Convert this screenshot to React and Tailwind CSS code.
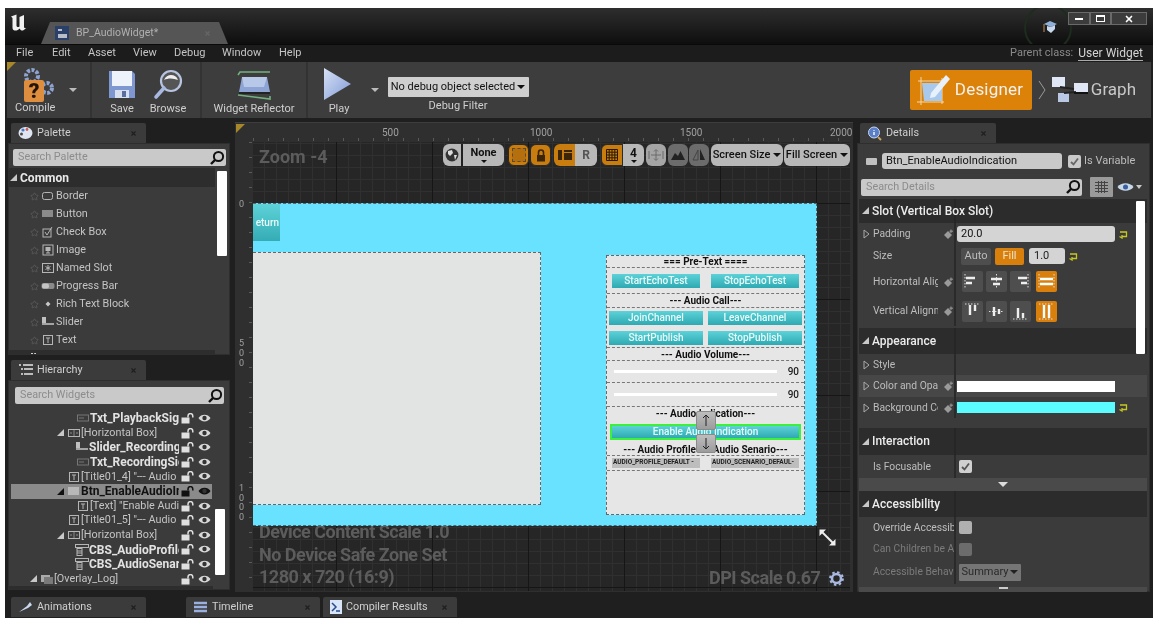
import React from "react";
import { Star, X } from "lucide-react";

const Tri = ({ open = true, c = "#c8c8c8" }) => open ? (
  <svg width="7" height="7" viewBox="0 0 7 7" className="shrink-0"><path d="M7 0V7H0Z" fill={c} /></svg>
) : (
  <svg width="7" height="10" viewBox="0 0 7 10" className="shrink-0"><path d="M1 1L6 5L1 9Z" fill="none" stroke="#aaa" /></svg>
);

const Search = () => (
  <svg width="16" height="16" viewBox="0 0 16 16" className="shrink-0"><circle cx="9.5" cy="6.5" r="4.6" fill="none" stroke="#111" strokeWidth="2" /><path d="M6 10L2 14" stroke="#111" strokeWidth="2.4" /></svg>
);

const Tab = ({ icon, label, w = "w-[135px]" }) => (
  <div className={`${w} h-[20px] bg-[#3b3b3b] rounded-t-[2px] flex items-center pl-[7px] pr-[9px] gap-[4px] text-[#cfcfcf] text-[10.8px]`}>
    {icon}
    <span className="flex-1">{label}</span>
    <X size={7} color="#1f1f1f" strokeWidth={4} />
  </div>
);

const SearchBox = ({ label, cls }) => (
  <div className={`${cls} h-[17px] bg-[#c9c9c9] rounded-[2px] flex items-center pl-[5px] pr-[1px] text-[#8c8c8c] text-[10.8px]`}>
    <span className="flex-1">{label}</span><Search />
  </div>
);

const PIcon = ({ t }) => {
  const s = { fill: "none", stroke: "#b5b5b5" };
  return (
    <svg width="14" height="12" viewBox="0 0 14 12" className="shrink-0">
      {t === "border" && <rect x="1.5" y="2.5" width="10" height="7" rx="2" {...s} />}
      {t === "button" && <rect x="1" y="2" width="11" height="7" fill="#8a8a8a" />}
      {t === "check" && <g><rect x="2" y="3" width="8" height="8" {...s} /><path d="M4 6L6 9L11 1" {...s} /></g>}
      {t === "image" && <g><rect x="2" y="1" width="10" height="10" {...s} /><rect x="4.5" y="3" width="5" height="4" fill="#b5b5b5" /><path d="M7 7V9M5 9H9" {...s} /></g>}
      {t === "slot" && <g><rect x="1.5" y="1.5" width="11" height="9" {...s} /><path d="M7 3V9M4.5 4.5L9.5 7.5M9.5 4.5L4.5 7.5" {...s} /></g>}
      {t === "progress" && <g><rect x="0.5" y="3" width="13" height="6" rx="2" fill="#8a8a8a" /><rect x="1" y="3.5" width="7" height="5" rx="2" fill="#c4c4c4" /></g>}
      {t === "rich" && <path d="M7 3.5L9.5 6L7 8.5L4.5 6Z" fill="#c8c8c8" />}
      {t === "slider" && <g><rect x="1" y="1" width="4" height="6" fill="#c0c0c0" /><path d="M1 8H13" stroke="#c0c0c0" strokeWidth="1.6" /></g>}
      {t === "text" && <g><rect x="2.5" y="1.5" width="9" height="9" {...s} /><path d="M5 4H9M7 4V9" {...s} /></g>}
      {t === "box" && <g><rect x="1.5" y="2.5" width="11" height="7" {...s} /><path d="M7 3V9M3 6H5M9 6H11" stroke="#8a8a8a" /></g>}
      {t === "txt" && <g><rect x="1.5" y="3" width="11" height="6" stroke="#777" fill="none" /><path d="M3 6H8" stroke="#777" /></g>}
      {t === "cbs" && <g><rect x="0.5" y="0.5" width="13" height="3" {...s} /><rect x="2" y="4.5" width="5" height="7" {...s} /><path d="M2 7H7M2 9H7" {...s} /></g>}
      {t === "overlay" && <g><rect x="1" y="2" width="9" height="7" fill="#aaa" /><rect x="4" y="4" width="9" height="7" fill="#7a7a7a" /></g>}
      {t === "btn" && <rect x="1" y="2" width="11" height="8" fill="#b8b8b8" />}
    </svg>
  );
};

const paletteItems = [
  ["border", "Border"], ["button", "Button"], ["check", "Check Box"], ["image", "Image"], ["slot", "Named Slot"],
  ["progress", "Progress Bar"], ["rich", "Rich Text Block"], ["slider", "Slider"], ["text", "Text"],
];

const LockIcon = ({ c = "#e0e0e0" }) => (
  <svg width="13" height="11" viewBox="0 0 13 11" className="shrink-0"><path d="M7 4.5V3a2.4 2.4 0 0 1 4.8 0V4.5" fill="none" stroke={c} strokeWidth="1.5" /><rect x="0.5" y="4.5" width="8" height="6" fill={c} /></svg>
);
const EyeIcon = ({ c = "#d8d8d8" }) => (
  <svg width="13" height="10" viewBox="0 0 13 10" className="shrink-0"><path d="M0.5 5C3 0.5 10 0.5 12.5 5C10 9.5 3 9.5 0.5 5Z" fill={c} /><circle cx="6.5" cy="5" r="2.2" fill="#333" /></svg>
);

const tree = [
  ["pl-[65px]", null, "txt", "Txt_PlaybackSignalVolume", 1],
  ["pl-[46px]", 1, "box", "[Horizontal Box]", 0],
  ["pl-[64px]", null, "slider", "Slider_RecordingVolume", 1],
  ["pl-[65px]", null, "txt", "Txt_RecordingSignalVolume", 1],
  ["pl-[56px]", null, "text", '[Title01_4] "--- Audio Indication', 0],
  ["pl-[46px]", 1, "btn", "Btn_EnableAudioIndication", 2],
  ["pl-[65px]", null, "text", '[Text] "Enable Audio Indication', 0],
  ["pl-[56px]", null, "text", '[Title01_5] "--- Audio Profile', 0],
  ["pl-[46px]", 1, "box", "[Horizontal Box]", 0],
  ["pl-[64px]", null, "cbs", "CBS_AudioProfile", 1],
  ["pl-[64px]", null, "cbs", "CBS_AudioSenario", 1],
  ["pl-[19px]", 1, "overlay", "[Overlay_Log]", 0],
];

const Palette = () => (
  <div className="flex flex-col">
    <div className="pl-[3px]">
      <Tab label="Palette" icon={
        <svg width="15" height="14" viewBox="0 0 15 14"><ellipse cx="7.5" cy="7" rx="7" ry="6" fill="#dfe6f2" /><circle cx="5" cy="4" r="1.6" fill="#4a78c8" /><circle cx="9" cy="3.5" r="1.4" fill="#c85a5a" /><circle cx="3.5" cy="8" r="1.5" fill="#4a4a4a" /></svg>
      } />
    </div>
    <div className="relative w-[222px] h-[212px] bg-[#3b3b3b] border border-[#2e2e2e] pt-[5px] overflow-hidden">
      <SearchBox label="Search Palette" cls="mx-[4px] w-[213px]" />
      <div className="mt-[2px] w-[206px] h-[19px] bg-[#2d2d2d] flex items-center pl-[1px] gap-[3px] text-[#e8e8e8] text-[12px] font-bold">
        <Tri /> <span>Common</span>
      </div>
      {paletteItems.map(([t, l]) => (
        <div key={l} className="h-[18px] flex items-center pl-[21px] text-[#c4c4c4] text-[10.8px]">
          <Star size={9} color="#6a6a6a" strokeWidth={1.5} className="shrink-0" />
          <span className="ml-[2px]"><PIcon t={t} /></span>
          <span className="ml-[1px]">{l}</span>
        </div>
      ))}
      <div className="mt-[1px] w-[206px] h-[18px] bg-[#2d2d2d] flex items-center pl-[1px] gap-[3px] text-[#e8e8e8] text-[12px] font-bold"><Tri /> <span>Edit</span></div>
      <div className="absolute left-[208px] top-[27px] w-[10px] h-[85px] bg-white rounded-[1px]" />
    </div>
  </div>
);

const Hierarchy = () => (
  <div className="flex flex-col mt-[5px]">
    <div className="pl-[3px]">
      <Tab label="Hierarchy" icon={
        <svg width="15" height="12" viewBox="0 0 15 12"><path d="M1 1H3M5 1H15M3 5H5M6 5H15M3 10H5M6 10H15" stroke="#e8e8e8" strokeWidth="1.7" /></svg>
      } />
    </div>
    <div className="relative w-[222px] h-[210px] bg-[#3b3b3b] border border-[#2e2e2e] pt-[6px] overflow-hidden">
      <SearchBox label="Search Widgets" cls="ml-[6px] w-[209px]" />
      <div className="mt-[7px] flex flex-col">
        {tree.map(([pl, tri, icon, label, kind], i) => (
          <div key={i} className={`relative ml-[2px] h-[14.6px] w-[201px] flex items-center ${pl} ${kind === 2 ? "bg-[#8b8b8b]" : ""}`}>
            {tri && <span className="mr-[3px]"><Tri c={kind === 2 ? "#111" : "#c8c8c8"} /></span>}
            <PIcon t={icon} />
            <span className={`whitespace-nowrap overflow-hidden flex-1 min-w-0 mr-[33px] ${kind === 0 ? "text-[10.8px] text-[#c4c4c4] font-normal" : kind === 1 ? "text-[12px] text-[#e2e2e2] font-bold" : "text-[12px] text-[#111] font-bold"}`}>{label}</span>
            <span className="absolute left-[170px] top-[2px]"><LockIcon c={kind === 2 ? "#111" : "#e0e0e0"} /></span>
            <span className="absolute left-[187px] top-[2px]"><EyeIcon c={kind === 2 ? "#111" : "#d8d8d8"} /></span>
          </div>
        ))}
      </div>
      <div className="absolute left-0 bottom-0 w-[204px] h-[3px] bg-[#2d2d2d]" />
      <div className="absolute left-[206px] top-[128px] w-[10px] h-[66px] bg-white rounded-[1px]" />
    </div>
  </div>
);

const CanvasBtn = ({ cls, children }) => (
  <div className={`h-[22px] flex items-center justify-center text-[11px] font-bold text-[#111] ${cls}`}>{children}</div>
);

const CanvasToolbar = () => (
  <div className="absolute left-[208px] top-[21px] flex items-center h-[22px]">
    <CanvasBtn cls="w-[20px] bg-[#b8b8b8] rounded-l-[6px] border-r-[2px] border-[#222]">
      <svg width="14" height="14" viewBox="0 0 14 14"><circle cx="7" cy="7" r="6.4" fill="#333" /><path d="M3 3L7 2L8 5L5 8L3 6ZM9 7L12 7L10 12Z" fill="#ddd" /></svg>
    </CanvasBtn>
    <CanvasBtn cls="w-[41px] bg-[#b8b8b8] rounded-r-[6px] flex-col text-[11px] leading-[12px]">None<span className="w-0 h-0 border-x-[3px] border-x-transparent border-t-[3px] border-t-[#111] mt-[1px]" /></CanvasBtn>
    <CanvasBtn cls="w-[21px] ml-[4px] bg-[#c87d0e] rounded-[6px] border border-[#2a2a2a]">
      <div className="w-[14px] h-[14px] border border-dashed border-[#5a4a30] bg-[#b56f0c]" />
    </CanvasBtn>
    <CanvasBtn cls="w-[21px] ml-[1px] bg-[#c87d0e] rounded-[6px] border border-[#2a2a2a]">
      <svg width="10" height="13" viewBox="0 0 10 13"><path d="M2.5 6V3.5a2.5 2.5 0 0 1 5 0V6" fill="none" stroke="#3a2506" strokeWidth="1.6" /><rect x="1" y="6" width="8" height="6.5" fill="#3a2506" /></svg>
    </CanvasBtn>
    <CanvasBtn cls="w-[21px] ml-[3px] bg-[#c87d0e] rounded-l-[6px]">
      <svg width="14" height="12" viewBox="0 0 14 12"><rect x="0" y="1" width="4" height="10" fill="#3a2506" /><rect x="6" y="4" width="8" height="7" fill="#3a2506" /><rect x="6" y="1" width="8" height="2" fill="#3a2506" /></svg>
    </CanvasBtn>
    <CanvasBtn cls="w-[22px] bg-[#b8b8b8] rounded-r-[6px] text-[#555] text-[12px]">R</CanvasBtn>
    <CanvasBtn cls="w-[22px] ml-[4px] bg-[#c87d0e] rounded-l-[6px] border border-[#2a2a2a]">
      <svg width="12" height="12" viewBox="0 0 12 12"><path d="M0.5 0.5H11.5V11.5H0.5ZM0.5 3.2H11.5M0.5 6H11.5M0.5 8.8H11.5M3.2 0.5V11.5M6 0.5V11.5M8.8 0.5V11.5" fill="none" stroke="#2a1a04" /></svg>
    </CanvasBtn>
    <CanvasBtn cls="w-[21px] bg-[#b8b8b8] rounded-r-[6px] flex-col text-[12px] leading-[12px]">4<span className="w-0 h-0 border-x-[3px] border-x-transparent border-t-[3px] border-t-[#111] mt-[1px]" /></CanvasBtn>
    <CanvasBtn cls="w-[20px] ml-[2px] bg-[#a5a5a5] rounded-[6px]">
      <svg width="16" height="14" viewBox="0 0 16 14"><path d="M1 3V11M15 3V11M3 7H13M8 2V12M6 3.5L8 1.5L10 3.5M6 10.5L8 12.5L10 10.5" fill="none" stroke="#6a6a6a" /></svg>
    </CanvasBtn>
    <CanvasBtn cls="w-[20px] ml-[2px] bg-[#6c6c6c] rounded-[6px]">
      <svg width="14" height="10" viewBox="0 0 14 10"><path d="M0 10L4 3L7 6L9.5 1L14 10Z" fill="#222" /></svg>
    </CanvasBtn>
    <CanvasBtn cls="w-[20px] ml-[1px] bg-[#6c6c6c] rounded-[6px]">
      <svg width="14" height="14" viewBox="0 0 14 14"><path d="M6 2L1 12H6Z" fill="none" stroke="#444" /><path d="M8 1L13 12H8Z" fill="#222" /></svg>
    </CanvasBtn>
    <CanvasBtn cls="w-[72px] h-[18px] ml-[2px] bg-[#b8b8b8] rounded-[6px] gap-[3px] font-medium text-[11.5px]">Screen Size<span className="w-0 h-0 border-x-[4px] border-x-transparent border-t-[4px] border-t-[#111]" /></CanvasBtn>
    <CanvasBtn cls="w-[66px] h-[18px] ml-[1px] bg-[#b8b8b8] rounded-[6px] gap-[3px] font-medium text-[11.5px]">Fill Screen<span className="w-0 h-0 border-x-[4px] border-x-transparent border-t-[4px] border-t-[#111]" /></CanvasBtn>
  </div>
);

const Teal = ({ w, children, h = "h-[14px]" }) => (
  <div className={`${w} ${h} bg-[linear-gradient(#5dd2d8,#2ea9b2)] flex items-center justify-center text-[#e8fbfb] text-[10px] font-medium`}>{children}</div>
);
const Title = ({ children, cls = "h-[13px]" }) => (
  <div className={`flex items-center justify-center text-[#111] text-[10px] font-bold whitespace-pre ${cls}`}>{children}</div>
);
const Dash = "border-b border-dashed border-[#777]";
const SliderRow = ({ h, cls = "" }) => (
  <div className={`${h} flex items-center pl-[7px] pr-[5px] ${cls}`}>
    <div className="w-[163px] h-[3px] bg-white" />
    <span className="ml-auto text-[#222] text-[10px] font-medium">90</span>
  </div>
);
const MoveBtn = ({ cls, d }) => (
  <div className={`absolute left-[89px] w-[20px] h-[19px] bg-[linear-gradient(#bdbdbd,#9c9c9c)] rounded-[2px] flex items-center justify-center border border-[#8a8a8a] ${cls}`}>
    <svg width="8" height="13" viewBox="0 0 8 13"><path d={d} fill="none" stroke="#222" /></svg>
  </div>
);

const AudioPanel = () => (
  <div className="absolute left-[353px] top-[51px] w-[199px] h-[260px] bg-[#e6e6e6] border border-dashed border-[#666]">
    <Title cls={`h-[12px] ${Dash}`}>{"=== Pre-Text ===="}</Title>
    <div className={`h-[26px] flex items-center justify-between px-[5px] ${Dash}`}>
      <Teal w="w-[88px]">StartEchoTest</Teal><Teal w="w-[88px]">StopEchoTest</Teal>
    </div>
    <Title cls={`h-[14px] ${Dash}`}>{"--- Audio Call---"}</Title>
    <div className={`h-[40px] flex flex-col justify-center gap-[6px] px-[2px] ${Dash}`}>
      <div className="flex justify-between"><Teal w="w-[94px]">JoinChannel</Teal><Teal w="w-[94px]">LeaveChannel</Teal></div>
      <div className="flex justify-between"><Teal w="w-[94px]">StartPublish</Teal><Teal w="w-[94px]">StopPublish</Teal></div>
    </div>
    <Title cls={`h-[13px] ${Dash}`}>{"--- Audio Volume---"}</Title>
    <SliderRow h="h-[22px]" cls={Dash} />
    <SliderRow h="h-[24px]" cls={Dash} />
    <Title>{"--- Audio Indication---"}</Title>
    <div className="h-[23px] flex items-center px-[3px]">
      <div className="w-[191px] h-[16px] border-2 border-[#3cf03c] bg-[linear-gradient(#5dd2d8,#2ea9b2)] flex items-center justify-center text-[#e8fbfb] text-[10px] font-medium">Enable Audio Indication</div>
    </div>
    <Title cls={`h-[13px] ${Dash}`}>{"--- Audio Profile --- Audio Senario---"}</Title>
    <div className={`h-[15px] flex items-center justify-between px-[5px] ${Dash}`}>
      <div className="w-[88px] h-[10px] bg-[#bdbdbd] text-[#222] text-[6.5px] font-bold flex items-center pl-[1px] whitespace-nowrap overflow-hidden">AUDIO_PROFILE_DEFAULT -</div>
      <div className="w-[88px] h-[10px] bg-[#bdbdbd] text-[#222] text-[6.5px] font-bold flex items-center pl-[1px] whitespace-nowrap overflow-hidden">AUDIO_SCENARIO_DEFAUL-</div>
    </div>
    <MoveBtn cls="top-[155px]" d="M1 4L4 1L7 4M4 1V12" />
    <MoveBtn cls="top-[178px]" d="M1 9L4 12L7 9M4 12V1" />
  </div>
);

const CanvasArea = () => (
  <div className="relative w-[618px] h-[470px] bg-[#2f2f2f] border-t border-[#3d3d3d]">
    <div className="absolute left-[1px] top-[1px] w-0 h-0 border-t-[9px] border-r-[9px] border-t-[#a8862a] border-r-transparent z-10" />
    {[["500", 147], ["1000", 295], ["1500", 445], ["2000", 595]].map(([t, x]) => (
      <span key={t} className="absolute top-[2px] text-[10px] text-[#a0a0a0]" style={{ left: x }}>{t}</span>
    ))}
    <div className="absolute left-[18px] top-[15px] w-[598px] h-[3px] bg-[repeating-linear-gradient(90deg,#5a5a5a_0,#5a5a5a_1px,transparent_1px,transparent_15px)]" />
    <div className="absolute left-[14px] top-[19px] w-[3px] h-[449px] bg-[repeating-linear-gradient(180deg,#5a5a5a_0,#5a5a5a_1px,transparent_1px,transparent_15px)]" />
    {[["0", 76], ["5", 215], ["0", 225], ["0", 235], ["1", 360], ["0", 370], ["0", 379], ["0", 389]].map(([t, y], i) => (
      <span key={i} className="absolute left-[4px] text-[9px] leading-[10px] text-[#a0a0a0]" style={{ top: y }}>{t}</span>
    ))}
    <div className="absolute left-[18px] top-[19px] w-[597px] h-[449px] overflow-hidden bg-[#262626] bg-[linear-gradient(90deg,#161616_1px,transparent_1px),linear-gradient(#161616_1px,transparent_1px),linear-gradient(90deg,#303030_1px,transparent_1px),linear-gradient(#303030_1px,transparent_1px)] bg-[size:96px_96px,96px_96px,12px_12px,12px_12px] bg-[position:83px_61px,83px_61px,11px_1px,11px_1px]">
      <div className="absolute left-[6px] top-[4px] text-[18px] font-bold text-[#5c5c5c] leading-[22px]">Zoom -4</div>
      <div className="absolute left-[6px] top-[379px] text-[18px] font-bold text-[#5c5c5c] leading-[22.5px] tracking-[-0.5px]">
        <div>Device Content Scale 1.0</div>
        <div>No Device Safe Zone Set</div>
        <div>1280 x 720 (16:9)</div>
      </div>
      <div className="absolute left-[456px] top-[425px] text-[18px] font-bold text-[#5c5c5c] leading-[22px] tracking-[-0.5px]">DPI Scale 0.67</div>
      <svg className="absolute left-[576px] top-[429px]" width="15" height="15" viewBox="0 0 15 15"><circle cx="7.5" cy="7.5" r="4.5" fill="none" stroke="#a8b8e0" strokeWidth="2.6" /><circle cx="7.5" cy="7.5" r="6.4" fill="none" stroke="#a8b8e0" strokeWidth="2" strokeDasharray="2.5 2.5" /></svg>
      <svg className="absolute left-[566px] top-[387px]" width="17" height="17" viewBox="0 0 17 17"><path d="M3 3L14 14" stroke="#eee" strokeWidth="2" /><path d="M0.5 0.5H7L0.5 7ZM16.5 16.5H10L16.5 10Z" fill="#eee" /></svg>
      <div className="absolute left-0 top-[61px] w-[564px] h-[323px] bg-[#69e2ff] border-y border-r border-dashed border-[#4a6a74]">
        <div className="absolute left-0 top-0 w-[27px] h-[37px] bg-[linear-gradient(#5dd2d8,#35acb5)] flex items-center justify-end pr-[1px] text-[#e8fbfb] text-[10px] font-medium overflow-hidden">eturn</div>
        <div className="absolute left-0 top-[48px] w-[288px] h-[253px] bg-[#e1e4e3] border-y border-r border-dashed border-[#666]" />
        <AudioPanel />
      </div>
    </div>
    <CanvasToolbar />
  </div>
);

const Reset = () => (
  <svg width="9" height="9" viewBox="0 0 9 9" className="shrink-0"><path d="M1 2H7.5V6.5H3M3 5V8L0.5 6.5" fill="none" stroke="#c8c820" strokeWidth="1.3" /></svg>
);
const Mark = () => (
  <svg width="10" height="10" viewBox="0 0 10 10" className="shrink-0"><path d="M0 6L4 2L8 6L4 10Z" fill="#9a9a9a" /><path d="M7 0.5V4M5.5 2.2H9" stroke="#9a9a9a" /></svg>
);

const Header = ({ children, h }) => (
  <div className={`flex ${h} bg-[#2c2c2c]`}>
    <div className="w-[97px] border-r-2 border-[#262626] flex items-center pl-[3px] pb-[1px] gap-[3px] text-[#ececec] text-[12px] font-medium whitespace-nowrap"><Tri />{children}</div>
  </div>
);
const Row = ({ h, label, tri, mark, dim, cls = "", children }) => (
  <div className={`flex ${h} ${cls}`}>
    <div className={`relative w-[97px] border-r-2 border-[#2a2a2a] flex items-center text-[10.3px] ${dim ? "text-[#7b7b7b]" : "text-[#bdbdbd]"}`}>
      <span className="w-[5px] ml-[4px] mr-[5px] flex items-center">{tri && <Tri open={false} />}</span>
      <span className={`whitespace-nowrap overflow-hidden min-w-0 ${mark ? "w-[65px] flex-none" : "flex-1"}`}>{label}</span>
      {mark && <span className="absolute left-[85px]"><Mark /></span>}
    </div>
    <div className="flex-1 flex items-center pl-[1px] gap-[4px]">{children}</div>
  </div>
);

const AlignBtn = ({ on, d, ml = "" }) => (
  <div className={`w-[21px] h-[21px] rounded-[2px] flex items-center justify-center ${ml} ${on ? "bg-[#d9800c]" : "bg-[#4e4e4e]"}`}>
    <svg width="17" height="17" viewBox="0 0 17 17">{d}</svg>
  </div>
);

const dashV = (x) => <path d={`M${x} 1V16`} stroke="#ddd" strokeDasharray="1.5 1.5" />;
const dashH = (y) => <path d={`M1 ${y}H16`} stroke="#ddd" strokeDasharray="1.5 1.5" />;

const Details = () => (
  <div className="flex flex-col pt-[1px]">
    <div className="pl-[3px]">
      <Tab w="w-[136px]" label="Details" icon={
        <svg width="15" height="15" viewBox="0 0 15 15"><circle cx="7" cy="6.5" r="5.5" fill="#5a7fc8" stroke="#c8d8f0" /><path d="M7 4V4.8M7 6V9" stroke="#fff" strokeWidth="1.4" /><path d="M11 11L14 14" stroke="#c8a060" strokeWidth="2" /></svg>
      } />
    </div>
    <div className="relative w-[293px] h-[449px] bg-[#3b3b3b] border border-[#2e2e2e]">
      <div className="h-[32px] flex items-center pl-[8px] pt-[2px]">
        <div className="w-[11px] h-[7px] bg-[#c0c0c0] rounded-[1px]" />
        <div className="ml-[5px] w-[180px] h-[16px] bg-[#c9c9c9] rounded-[3px] text-[#111] text-[11px] flex items-center pl-[4px]">Btn_EnableAudioIndication</div>
        <div className="ml-[6px] w-[13px] h-[13px] bg-[#c9c9c9] rounded-[2px] flex items-center justify-center">
          <svg width="9" height="9" viewBox="0 0 9 9"><path d="M1 5L3.5 7.5L8 1.5" fill="none" stroke="#666" strokeWidth="1.8" /></svg>
        </div>
        <span className="ml-[3px] text-[#bdbdbd] text-[11px]">Is Variable</span>
      </div>
      <div className="h-[22px] flex items-center pl-[3px]">
        <SearchBox label="Search Details" cls="w-[221px]" />
        <div className="ml-[8px] w-[23px] h-[20px] bg-[#9a9a9a] rounded-[1px] flex items-center justify-center">
          <svg width="13" height="12" viewBox="0 0 13 12"><path d="M0 1.5H13M0 4.5H13M0 7.5H13M0 10.5H13M3.5 0V12M6.5 0V12M9.5 0V12" stroke="#444" /></svg>
        </div>
        <svg className="ml-[4px]" width="17" height="10" viewBox="0 0 17 10"><path d="M0.5 5C4 0 13 0 16.5 5C13 10 4 10 0.5 5Z" fill="#c8d8e8" /><circle cx="8.5" cy="5" r="2.5" fill="#3a5fa0" /></svg>
        <span className="ml-[2px] w-0 h-0 border-x-[3.5px] border-x-transparent border-t-[4px] border-t-[#c8c8c8]" />
      </div>
      <div className="mt-[1px] ml-[1px] w-[288px] flex flex-col">
        <Header h="h-[24px]">Slot (Vertical Box Slot)</Header>
        <Row h="h-[22px]" label="Padding" tri mark>
          <div className="w-[158px] h-[16px] bg-[#d4d4d4] rounded-[3px] text-[#111] text-[11px] flex items-center pl-[4px]">20.0</div><Reset />
        </Row>
        <Row h="h-[22px]" label="Size">
          <div className="ml-[4px] w-[30px] h-[17px] bg-[#4e4e4e] rounded-[2px] text-[#bbb] text-[11px] flex items-center justify-center">Auto</div>
          <div className="w-[29px] h-[17px] bg-[#d9800c] rounded-[2px] text-[#f0e0c8] text-[11px] flex items-center justify-center">Fill</div>
          <div className="ml-[1px] w-[36px] h-[16px] bg-[#d4d4d4] rounded-[3px] text-[#222] text-[11px] flex items-center pl-[5px]">1.0</div><Reset />
        </Row>
        <Row h="h-[29px]" label="Horizontal Alignment" mark>
          <div className="ml-[5px] flex items-center">
            <AlignBtn d={<g>{dashV(1)}<path d="M2 5H11M2 10H8" stroke="#eee" strokeWidth="2.4" /></g>} />
            <AlignBtn ml="ml-[3px]" d={<g>{dashV(8.5)}<path d="M3 6H14M5 11H12" stroke="#eee" strokeWidth="2.4" /></g>} />
            <AlignBtn ml="ml-[3px]" d={<g>{dashV(16)}<path d="M6 5H15M9 10H15" stroke="#eee" strokeWidth="2.4" /></g>} />
            <AlignBtn ml="ml-[5px]" on d={<g>{dashV(1)}{dashV(16)}<path d="M2 6H15M2 11H15" stroke="#fff" strokeWidth="2.4" /></g>} />
          </div>
        </Row>
        <Row h="h-[30px]" label="Vertical Alignment" mark>
          <div className="ml-[5px] flex items-center">
            <AlignBtn d={<g>{dashH(1)}<path d="M6 2V12M11 2V8" stroke="#eee" strokeWidth="2.4" /></g>} />
            <AlignBtn ml="ml-[3px]" d={<g>{dashH(8.5)}<path d="M6 4V13M11 6V11" stroke="#eee" strokeWidth="2.4" /></g>} />
            <AlignBtn ml="ml-[3px]" d={<g>{dashH(16)}<path d="M6 5V15M11 10V15" stroke="#eee" strokeWidth="2.4" /></g>} />
            <AlignBtn ml="ml-[5px]" on d={<g>{dashH(1)}{dashH(16)}<path d="M6 2V15M11 2V15" stroke="#fff" strokeWidth="2.4" /></g>} />
          </div>
        </Row>
        <div className="h-[2px]" />
        <Header h="h-[26px]">Appearance</Header>
        <Row h="h-[21px]" label="Style" tri />
        <Row h="h-[22px]" label="Color and Opacity" tri mark cls="bg-[#474747]">
          <div className="w-[158px] h-[11px] bg-white" />
        </Row>
        <Row h="h-[21px]" label="Background Color" tri mark>
          <div className="w-[158px] h-[11px] bg-[#5afcff]" /><Reset />
        </Row>
        <div className="h-[10px]" />
        <Header h="h-[27px]">Interaction</Header>
        <Row h="h-[23px]" label="Is Focusable">
          <div className="ml-[2px] w-[13px] h-[13px] bg-[#d0d0d0] rounded-[2px] flex items-center justify-center">
            <svg width="9" height="9" viewBox="0 0 9 9"><path d="M1 5L3.5 7.5L8 1.5" fill="none" stroke="#555" strokeWidth="1.8" /></svg>
          </div>
        </Row>
        <div className="h-[13px] bg-[#4a4a4a] flex items-center justify-center"><span className="w-0 h-0 border-x-[5px] border-x-transparent border-t-[5px] border-t-[#ddd]" /></div>
        <Header h="h-[26px]">Accessibility</Header>
        <Row h="h-[21px]" label="Override Accessible Text">
          <div className="ml-[2px] w-[13px] h-[13px] bg-[#b0b0b0] rounded-[2px]" />
        </Row>
        <Row h="h-[22px]" label="Can Children be Accessible" dim>
          <div className="ml-[2px] w-[13px] h-[13px] bg-[#6c6c6c] rounded-[2px]" />
        </Row>
        <Row h="h-[24px]" label="Accessible Behavior" dim>
          <div className="ml-[2px] w-[62px] h-[17px] bg-[#757575] rounded-[1px] text-[#2a2a2a] text-[11px] flex items-center justify-center gap-[2px]">Summary<span className="w-0 h-0 border-x-[4px] border-x-transparent border-t-[4px] border-t-[#222]" /></div>
        </Row>
        <div className="mt-[3px] h-[5px] bg-[#4a4a4a] flex items-start justify-center"><span className="w-[9px] h-[2px] bg-[#ccc]" /></div>
      </div>
      <div className="absolute left-[278px] top-[57px] w-[9px] h-[153px] bg-white rounded-[1px]" />
    </div>
  </div>
);

const ToolLabel = ({ children }) => <span className="text-[11px] text-[#cfcfcf] leading-[12px]">{children}</span>;
const Arrow = ({ cls }) => <span className={`w-0 h-0 border-x-[4px] border-x-transparent border-t-[4px] border-t-[#bbb] ${cls}`} />;

const TopToolbar = () => (
  <div className="relative mx-[2px] h-[56px] bg-[#3d3d3d] flex items-stretch">
    <div className="absolute left-0 top-0 w-0 h-0 border-t-[9px] border-r-[9px] border-t-[#a8862a] border-r-transparent" />
    <div className="w-[85px] flex items-center border-r-2 border-[#333] pl-[8px] relative">
      <div className="flex flex-col items-start">
        <svg width="40" height="36" viewBox="0 0 40 36">
          <circle cx="17" cy="9" r="6" fill="none" stroke="#8fa3cf" strokeWidth="4" strokeDasharray="3 1.5" />
          <circle cx="32" cy="21" r="5" fill="none" stroke="#8fa3cf" strokeWidth="4" strokeDasharray="3 1.5" />
          <rect x="9" y="13" width="20" height="22" rx="2" fill="#de8e3e" />
          <text x="19" y="31" textAnchor="middle" fontFamily="Roboto" fontWeight="900" fontSize="21" fill="#241407">?</text>
        </svg>
        <span className="text-[11px] text-[#cfcfcf] leading-[12px] -mt-[1px]">Compile</span>
      </div>
      <Arrow cls="absolute left-[62px] top-[26px]" />
    </div>
    <div className="w-[110px] flex items-end border-r-2 border-[#333] pb-[3px]">
      <div className="w-[46px] ml-[7px] flex flex-col items-center gap-[3px]">
        <svg width="28" height="31" viewBox="0 0 28 31"><path d="M1 2H24L27 5V29H1Z" fill="#7f97d0" /><rect x="4" y="2" width="20" height="15" fill="#eef2fa" /><rect x="7" y="21" width="14" height="8" fill="#d8dfee" /><rect x="14" y="22" width="4" height="6" fill="#5a6fa0" /></svg>
        <ToolLabel>Save</ToolLabel>
      </div>
      <div className="w-[46px] flex flex-col items-center gap-[3px]">
        <svg width="30" height="31" viewBox="0 0 30 31"><circle cx="18" cy="12" r="10" fill="#555" stroke="#b8c4e0" strokeWidth="2.2" /><path d="M11 11C14 4 23 5 25 11C20 9 15 9 11 11Z" fill="#eee" /><path d="M11 19L3 28" stroke="#a8b8e0" strokeWidth="3.6" strokeLinecap="round" /></svg>
        <ToolLabel>Browse</ToolLabel>
      </div>
    </div>
    <div className="w-[106px] flex flex-col items-center justify-end border-r-2 border-[#333] pb-[3px] gap-[3px]">
      <svg width="36" height="30" viewBox="0 0 36 30"><path d="M2 5L4 2H34" fill="none" stroke="#73b080" strokeWidth="1.6" /><path d="M6 7H31L34 22H3Z" fill="#8ea4d4" /><path d="M6 7H31L28 17H8Z" fill="#b8c8e8" /><path d="M2 25L34 29V26" fill="none" stroke="#73b080" strokeWidth="1.6" /><path d="M3 22H34L34 24H3Z" fill="#222" /></svg>
      <ToolLabel>Widget Reflector</ToolLabel>
    </div>
    <div className="relative w-[79px] flex pl-[11px] items-end pb-[3px]">
      <div className="w-[40px] flex flex-col items-center gap-[1px]">
        <svg width="30" height="35" viewBox="0 0 30 35" className="-ml-[3px]"><defs><linearGradient id="pg" x1="0" y1="0" x2="1" y2="1"><stop offset="0" stopColor="#d8e2f6" /><stop offset="1" stopColor="#7f9ad6" /></linearGradient></defs><path d="M1 1L28 17L1 33Z" fill="url(#pg)" /></svg>
        <ToolLabel>Play</ToolLabel>
      </div>
      <Arrow cls="absolute left-[63px] top-[26px]" />
    </div>
    <div className="w-[142px] flex flex-col items-center pt-[15px]">
      <div className="w-[141px] h-[20px] bg-[#cfcfcf] rounded-[1px] text-[#111] text-[11px] flex items-center justify-center gap-[2px]">No debug object selected<span className="w-0 h-0 border-x-[4px] border-x-transparent border-t-[4px] border-t-[#111]" /></div>
      <span className="mt-[2px] text-[11px] text-[#cfcfcf] leading-[14px]">Debug Filter</span>
    </div>
    <div className="ml-auto flex items-center pr-[15px]">
      <div className="w-[122px] h-[40px] bg-[#dc8208] rounded-[2px] flex items-center pl-[6px] gap-[3px] text-[#f2f2f2] text-[17px]">
        <svg width="36" height="36" viewBox="0 0 36 36"><path d="M2 9H30M5 5V33M1 30H28M26 6V32" stroke="#f5d8a8" strokeWidth="1" fill="none" /><path d="M6 11H26V29H8Z" fill="#a8c8ec" /><path d="M15 21L30 3L34 7L19 25L14 26Z" fill="#e8f0fa" /></svg>
        <span className="tracking-[0.2px]">Designer</span>
      </div>
      <svg className="ml-[6px]" width="9" height="20" viewBox="0 0 9 20"><path d="M1 1L7 10L1 19" fill="none" stroke="#9a9a9a" /></svg>
      <svg className="ml-[5px]" width="36" height="28" viewBox="0 0 36 28"><rect x="0" y="1" width="13" height="10" fill="#dfe6f5" /><rect x="22" y="7" width="14" height="9" fill="#dfe6f5" /><rect x="6" y="17" width="11" height="9" fill="#b8c8e4" /><path d="M8 11L22 13M12 17L24 16" stroke="#222" strokeWidth="2" /><path d="M22 16H36V18H22Z" fill="#111" /></svg>
      <span className="ml-[3px] text-[#c8c8c8] text-[17px]">Graph</span>
    </div>
  </div>
);

const winBtns = [
  ["w-[22px]", <span key="a" className="w-[8px] h-[2px] bg-white" />],
  ["w-[21px]", <span key="b" className="w-[9px] h-[7px] border border-t-2 border-white" />],
  ["w-[36px]", <X key="c" size={10} color="#fff" strokeWidth={4} />],
];

export default function App() {
  return (
    <div className="w-[1160px] h-[624px] bg-white pl-[5px] pt-[8px] overflow-hidden font-['Roboto',sans-serif]">
      <div className="w-[1148px] h-[610px] bg-[#1f1f1f] flex flex-col blur-[0.45px]">
        <div className="relative h-[36px] bg-[linear-gradient(#2e2e2e,#0e0e0e)] flex items-end pl-[36px]">
          <svg className="absolute left-[5px] top-[6px]" width="17" height="17" viewBox="0 0 17 17"><path d="M1 2.5L6.5 0.5V11.5C6.5 13 8 13.5 9.5 12.5V3L14 1V13C14 14 15 14.5 16.5 14L13 16.5C11.5 16.8 10 16 9.8 14.5C8.5 16 6.5 16.8 4.5 16.5C3 16.2 2.5 15 2.5 13.5V4Z" fill="#f0f0f0" /></svg>
          <div className="w-[187px] h-[22px] bg-[#555555] [clip-path:polygon(9px_0,calc(100%-9px)_0,100%_100%,0_100%)] flex items-center pl-[14px] gap-[7px] text-[#b0b0b0] text-[10.5px]">
            <svg width="14" height="14" viewBox="0 0 14 14"><rect width="14" height="14" fill="#2a3f6a" /><path d="M3 4H7M3 9H12M3 11H12" stroke="#e8e8e8" strokeWidth="1.3" /></svg>
            <span className="flex-1">BP_AudioWidget*</span>
            <X size={7} color="#666" strokeWidth={4} className="mr-[17px]" />
          </div>
          <svg className="absolute left-[1018px] top-0" width="50" height="36" viewBox="0 0 50 36"><circle cx="25" cy="20" r="23" fill="none" stroke="#1e2c1e" strokeWidth="2" /></svg>
          <div className="absolute left-[1038px] top-[12px]">
            <svg width="14" height="14" viewBox="0 0 14 14"><path d="M1 4L7 1L14 4L8 7Z" fill="#8fb0d8" /><path d="M4 6V10L8 13L12 9V5L8 7Z" fill="#c8d8f0" /><path d="M1 4V12" stroke="#b89050" /></svg>
          </div>
          <div className="absolute left-[1063px] top-[4px] flex h-[13px]">
            {winBtns.map(([w, el], i) => (
              <div key={i} className={`${w} h-[13px] bg-[#3c3c3c] border border-[#6a6a6a] flex items-center justify-center`}>{el}</div>
            ))}
          </div>
        </div>
        <div className="h-[18px] bg-[#1c1c1c] border-t border-[#0a0a0a] flex items-center pl-[11px] pr-[10px] text-[#c4c4c4] text-[11px]">
          <span className="w-[36px]">File</span><span className="w-[36px]">Edit</span><span className="w-[45px]">Asset</span><span className="w-[41px]">View</span><span className="w-[48px]">Debug</span><span className="w-[57px]">Window</span><span>Help</span>
          <span className="ml-auto text-[#8a8a8a]">Parent class:</span>
          <span className="ml-[5px] text-[#d4d4d4] text-[12px] border-b border-[#aaa] leading-[13px]">User Widget</span>
        </div>
        <TopToolbar />
        <div className="h-[479px] flex pl-[3px] pt-[4px]">
          <div className="w-[227px] pt-[1px]">
            <Palette />
            <Hierarchy />
          </div>
          <CanvasArea />
          <div className="ml-[4px]"><Details /></div>
        </div>
        <div className="h-[21px] flex pl-[6px] items-start">
          <Tab label="Animations" icon={<svg width="15" height="12" viewBox="0 0 15 12"><path d="M1 11L9 5L12 1L14 4L10 7Z" fill="#c8d8f0" /></svg>} />
          <div className="ml-[40px]"><Tab w="w-[134px]" label="Timeline" icon={<svg width="15" height="12" viewBox="0 0 15 12"><path d="M1 2H14M1 6H14M1 10H14" stroke="#9ab0e0" strokeWidth="2.4" /></svg>} /></div>
          <div className="ml-[3px]"><Tab w="w-[134px]" label="Compiler Results" icon={<svg width="12" height="14" viewBox="0 0 12 14"><rect width="12" height="14" fill="#d8e4f8" /><path d="M2 3L6 7L2 11M6 11H10" stroke="#2a4a8a" strokeWidth="1.5" fill="none" /></svg>} /></div>
        </div>
      </div>
    </div>
  );
}
